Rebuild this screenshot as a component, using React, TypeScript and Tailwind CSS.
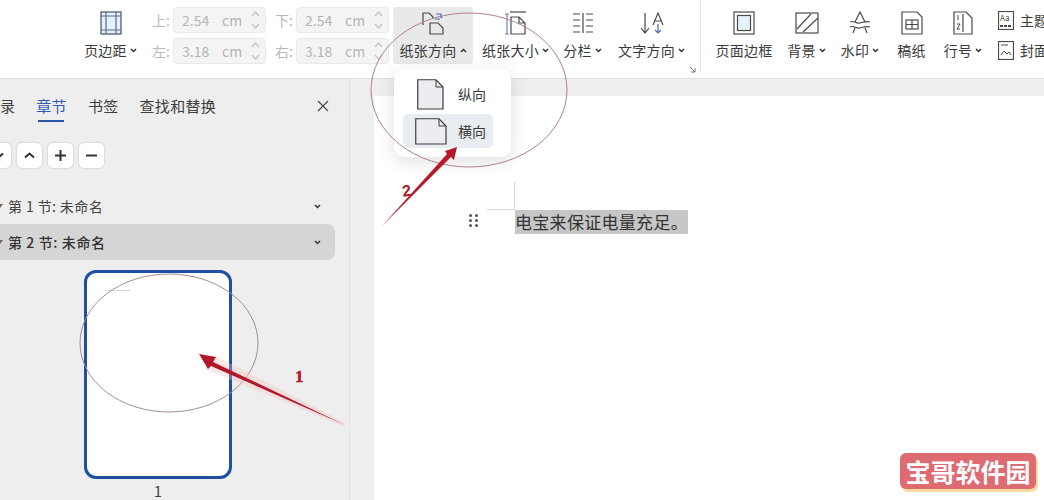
import type { ReactNode } from "react";

const Caret = ({ up = false }: { up?: boolean }) => (
  <svg width="7" height="5" viewBox="0 0 7 5" className="ml-[3px] shrink-0">
    <path d={up ? "M1 4l2.5-2.5L6 4" : "M1 1l2.5 2.5L6 1"} fill="none" stroke="#333" strokeWidth="1.5" />
  </svg>
);

function ToolBtn(props: { label: string; icon: ReactNode; w: string; caret?: boolean; up?: boolean; active?: boolean }) {
  return (
    <div className={`flex h-[57px] flex-col items-center rounded-[3px] pt-[3px] ${props.w} ${props.active ? "bg-[#e9e9e9]" : ""}`}>
      <div className="flex h-[25px] items-center justify-center">{props.icon}</div>
      <div className="mt-[5px] flex items-center whitespace-nowrap text-[14px] leading-[20px] tracking-[0.25px] text-[#3a3a3a]">
        {props.label}
        {props.caret && <Caret up={props.up} />}
      </div>
    </div>
  );
}

function MarginField({ label, value }: { label: string; value: string }) {
  return (
    <div className="flex items-center">
      <span className="w-[21px] text-[14px] text-[#b9b9b9]">{label}</span>
      <div className="flex h-[26px] w-[93px] items-center rounded-[4px] border border-[#e9e9e9] bg-[#f4f4f4] pl-[8px] pr-[5px] text-[14px] text-[#b4b4b4]">
        <span className="w-[40px]">{value}</span>
        <span>cm</span>
        <svg width="9" height="22" viewBox="0 0 9 22" className="ml-auto">
          <path d="M1 7l3.5-4L8 7M1 15l3.5 4L8 15" fill="none" stroke="#c2c2c2" strokeWidth="1.2" />
        </svg>
      </div>
    </div>
  );
}

const line = { fill: "none", stroke: "#4a4a4a", strokeWidth: 1.2 };

const icons = {
  margin: (
    <svg width="22" height="24" viewBox="0 0 22 24">
      <rect x="1" y="1" width="20" height="22" fill="#e4f2f9" stroke="#46506a" strokeWidth="1.2" />
      <path d="M6 1v22M16 1v22M1 5h20M1 19h20" stroke="#5b6b92" strokeWidth="1.2" fill="none" />
    </svg>
  ),
  orient: (
    <svg width="24" height="24" viewBox="0 0 24 24">
      <path d="M2 14V2h6l4 4v2" {...line} />
      <path d="M9 12h8l5 5v6H9z" {...line} />
      <path d="M15 3h5v4M21 7l-2-2M14 8h5" fill="none" stroke="#4f6cae" strokeWidth="1.2" />
    </svg>
  ),
  size: (
    <svg width="24" height="24" viewBox="0 0 24 24">
      <path d="M3 3v20M1 3h4M1 23h4" fill="none" stroke="#6c82b5" strokeWidth="1.2" />
      <path d="M6 1h16" {...line} />
      <path d="M7 6h8l6 6v11H7zM15 6v6h6" {...line} />
    </svg>
  ),
  columns: (
    <svg width="22" height="22" viewBox="0 0 22 22">
      <path d="M1 2h7M1 8h7M1 14h7M1 20h7M14 2h7M14 8h7M14 14h7M14 20h7" {...line} />
      <path d="M11 1v20" {...line} />
    </svg>
  ),
  textDir: (
    <svg width="24" height="24" viewBox="0 0 24 24">
      <path d="M5 2v20M1 17l4 5 4-5" {...line} />
      <path d="M13 14l5-12 5 12M15 10h6" {...line} />
      <path d="M18 13v9M15 19l3 3 3-3" fill="none" stroke="#4f6cae" strokeWidth="1.2" />
    </svg>
  ),
  border: (
    <svg width="22" height="24" viewBox="0 0 22 24">
      <rect x="1" y="1" width="20" height="22" fill="none" stroke="#4a4a4a" strokeWidth="1.2" />
      <rect x="4.500" y="4.500" width="13" height="15" fill="#e6f3f9" stroke="#4a4a4a" strokeWidth="1.2" />
    </svg>
  ),
  bg: (
    <svg width="24" height="22" viewBox="0 0 24 22">
      <rect x="1" y="1" width="22" height="20" {...line} />
      <path d="M2 17L16 2M8 20L23 6" {...line} />
    </svg>
  ),
  mark: (
    <svg width="22" height="24" viewBox="0 0 22 24">
      <path d="M6 11l5-10 5 10M1 11c4-2 6 2 10 1s6-2 10-1M1 16c4-2 6 2 10 1s6-2 10-1M4 22l2-5M18 22l-2-5" {...line} />
    </svg>
  ),
  grid: (
    <svg width="22" height="24" viewBox="0 0 22 24">
      <path d="M1 1h15l5 5v17H1z" {...line} />
      <rect x="5" y="9" width="12" height="9" {...line} />
      <path d="M11 9v9M5 13.500h12" {...line} />
    </svg>
  ),
  lineNo: (
    <svg width="20" height="24" viewBox="0 0 20 24">
      <path d="M1 1h12l6 6v16H1z" {...line} />
      <path d="M10 3v18" {...line} />
      <path d="M5 4v5M4 13h3l-3 5h3" fill="none" stroke="#4a4a4a" strokeWidth="1" />
    </svg>
  ),
};

const Page = ({ w, h }: { w: number; h: number }) => (
  <svg width={w} height={h} viewBox={`0 0 ${w} ${h}`}>
    <path
      d={`M.75.75H${w - 8}L${w - 1} 8V${h - 1}H.75z`}
      fill="#ebedf0"
      stroke="#3c3c3c"
      strokeWidth="1.2"
    />
    <path d={`M${w - 8} 1v7h7`} fill="none" stroke="#3c3c3c" strokeWidth="1" />
  </svg>
);

const Marker = () => (
  <svg width="6" height="6" viewBox="0 0 6 6" className="-ml-[3px] mr-[5px] shrink-0">
    <path d="M0 1h6L3 5z" fill="#666" />
  </svg>
);

export default function App() {
  return (
    <div
      className="relative flex h-[500px] w-[1044px] flex-col overflow-hidden bg-white"
      style={{ fontFamily: '"Noto Sans CJK SC", "Liberation Sans", sans-serif' }}
    >
      <header className="flex h-[78px] shrink-0 items-start bg-white pl-[83px] pt-[7px] [&>*]:shrink-0">
        <ToolBtn label="页边距" icon={icons.margin} w="w-[55px]" caret />
        <div className="ml-[14px] grid grid-cols-2 gap-x-[9px] gap-y-[5px]">
          <MarginField label="上:" value="2.54" />
          <MarginField label="下:" value="2.54" />
          <MarginField label="左:" value="3.18" />
          <MarginField label="右:" value="3.18" />
        </div>
        <div className="ml-[4px]">
          <ToolBtn label="纸张方向" icon={icons.orient} w="w-[80px]" caret up active />
        </div>
        <div className="ml-[8px]">
          <ToolBtn label="纸张大小" icon={icons.size} w="w-[69px]" caret />
        </div>
        <div className="ml-[12px]">
          <ToolBtn label="分栏" icon={icons.columns} w="w-[41px]" caret />
        </div>
        <div className="ml-[14px]">
          <ToolBtn label="文字方向" icon={icons.textDir} w="w-[69px]" caret />
        </div>
        <div className="relative ml-[14px] h-[66px] w-[15px] -translate-y-[7px]">
          <svg width="7" height="7" viewBox="0 0 7 7" className="absolute -left-[11px] top-[66px]">
            <path d="M1 1l5 5M6 2v4H2" fill="none" stroke="#777" strokeWidth="1" />
          </svg>
          <div className="h-[73px] w-px bg-[#e4e4e4]" />
        </div>
        <ToolBtn label="页面边框" icon={icons.border} w="w-[58px]" />
        <div className="ml-[14px]">
          <ToolBtn label="背景" icon={icons.bg} w="w-[39px]" caret />
        </div>
        <div className="ml-[14px]">
          <ToolBtn label="水印" icon={icons.mark} w="w-[40px]" caret />
        </div>
        <div className="ml-[17px]">
          <ToolBtn label="稿纸" icon={icons.grid} w="w-[29px]" />
        </div>
        <div className="ml-[17px]">
          <ToolBtn label="行号" icon={icons.lineNo} w="w-[40px]" caret />
        </div>
        <div className="ml-[15px] flex flex-col gap-[10px] pt-[3px]">
          <div className="flex items-center gap-[6px] whitespace-nowrap text-[14px] leading-[20px] text-[#3a3a3a]">
            <svg width="16" height="19" viewBox="0 0 16 19">
              <rect x=".5" y=".5" width="15" height="18" {...line} />
              <text x="2" y="10" fontSize="8" fill="#444">Aa</text>
              <path d="M2 15h12" stroke="#444" strokeWidth="2" strokeDasharray="3 1" />
            </svg>
            主题
          </div>
          <div className="flex items-center gap-[6px] whitespace-nowrap text-[14px] leading-[20px] text-[#3a3a3a]">
            <svg width="16" height="19" viewBox="0 0 16 19">
              <rect x=".5" y=".5" width="15" height="18" {...line} />
              <path d="M3 4h7M3 14l3-4 3 3 2-2 2 3" {...line} strokeWidth="1" />
            </svg>
            封面
          </div>
        </div>
      </header>

      <div className="flex min-h-0 flex-1 border-t border-[#dedede]">
        <aside className="w-[350px] shrink-0 overflow-hidden border-r border-[#e2e2e2] bg-[#eeeeee]">
          <div className="mt-[15px] flex h-[26px] items-start justify-between pr-[20px]">
            <div className="flex gap-[21px] text-[15px] leading-[24px] tracking-[0.3px] text-[#3d3d3d]">
              <span>录</span>
              <span className="relative text-[#2f5cb4]">
                章节
                <span className="absolute left-[2px] top-[26px] h-[2px] w-[26px] bg-[#2b55a8]" />
              </span>
              <span>书签</span>
              <span>查找和替换</span>
            </div>
            <svg width="12" height="12" viewBox="0 0 12 12" className="mt-[6px]">
              <path d="M1 1l10 10M11 1L1 11" stroke="#444" strokeWidth="1.1" />
            </svg>
          </div>
          <div className="mt-[23px] -ml-[14px] flex gap-[6px]">
            {["M8 10.500l4.500 4 4.500-4", "M8 14.500l4.500-4 4.500 4", "M7 12.500h11M12.500 7v11", "M7 12.500h11"].map((d) => (
              <div key={d} className="h-[25px] w-[25px] rounded-[5px] bg-white shadow-[0_0_2px_rgba(0,0,0,0.25)]">
                <svg width="25" height="25" viewBox="0 0 25 25">
                  <path d={d} fill="none" stroke="#333" strokeWidth="2" />
                </svg>
              </div>
            ))}
          </div>
          <div className="mt-[20px] flex h-[36px] w-[335px] items-center justify-between pr-[14px] text-[14px] tracking-[0.4px] text-[#444]">
            <span className="flex items-center whitespace-pre">
              <Marker />
              第 1 节: 未命名
            </span>
            <Caret />
          </div>
          <div className="flex h-[36px] w-[335px] items-center justify-between rounded-r-[8px] bg-[#d5d5d5] pr-[14px] text-[14px] font-medium tracking-[0.6px] text-[#333]">
            <span className="flex items-center whitespace-pre">
              <Marker />
              第 2 节: 未命名
            </span>
            <Caret />
          </div>
          <div className="ml-[84px] mt-[10px] h-[209px] w-[148px] rounded-[12px] border-[3px] border-[#1f4fa3] bg-white pl-[20px] pt-[17px]">
            <div className="h-px w-[23px] bg-[#d4d4d4]" />
          </div>
          <div className="ml-[84px] mt-[3px] w-[148px] text-center text-[15px] leading-[18px] text-[#444]">1</div>
        </aside>

        <div className="flex min-w-0 flex-1 flex-col bg-[#efefef]">
          <div className="h-[17px] shrink-0" />
          <main className="ml-[24px] flex-1 bg-white pl-[95px] pt-[86px]">
            <div className="flex items-start">
              <div className="mt-[32px] grid w-[9px] shrink-0 grid-cols-[3px_3px] gap-x-[3px] gap-y-[2px]">
                {[0, 1, 2, 3, 4, 5].map((i) => (
                  <span key={i} className="h-[3px] w-[3px] rounded-full bg-[#555]" />
                ))}
              </div>
              <div className="ml-[9px] w-[28px] shrink-0">
                <div className="ml-[27px] h-[27px] w-px bg-[#d8d8d8]" />
                <div className="h-px w-[28px] bg-[#d8d8d8]" />
              </div>
              <div className="mt-[28px] flex h-[24px] w-[173px] items-center whitespace-nowrap bg-[#c6c6c6] text-[17px] tracking-[0.3px] text-[#333]">
                电宝来保证电量充足。
              </div>
            </div>
          </main>
        </div>
      </div>

      {/* dropdown over the doc */}
      <div className="absolute left-[394px] top-[69px] h-[88px] w-[117px] rounded-[10px] bg-white px-[9px] pt-[7px] shadow-[0_4px_18px_rgba(0,0,0,0.13)]">
        <div className="flex h-[36px] items-center pl-[14px] text-[14px] text-[#3a3a3a]">
          <Page w={27} h={31} />
          <span className="ml-[14px]">纵向</span>
        </div>
        <div className="mt-[2px] flex h-[34px] w-[90px] items-center rounded-[5px] bg-[#e9ecf0] pl-[12px] text-[14px] text-[#3a3a3a]">
          <Page w={32} h={27} />
          <span className="ml-[11px]">横向</span>
        </div>
      </div>

      {/* hand-drawn annotations */}
      <svg width="1044" height="500" viewBox="0 0 1044 500" className="pointer-events-none absolute left-0 top-0">
        <ellipse cx="469" cy="90" rx="98" ry="77" fill="none" stroke="#b07f88" strokeWidth="1" />
        <ellipse cx="169" cy="343" rx="89" ry="69" fill="none" stroke="#a38d92" strokeWidth="1" />
        <path d="M345 425L215 358 208 368z" fill="#f2aab0" opacity="0.35" stroke="#f5c2c6" strokeWidth="4" />
        <path d="M345 425L211 366 208 369 199 354 216 357 213 362z" fill="#b2182b" />
        <path d="M382 226L447 154 445 151 457 147 454 160 451 157z" fill="#b9182c" />
        <text x="295" y="382" fontSize="17" fontWeight="700" fill="#b2182b" stroke="#b2182b" strokeWidth="0.5" fontFamily='"Liberation Serif", serif'>1</text>
        <text x="402" y="196" fontSize="16" fontWeight="700" fill="#b2182b" fontFamily='"Liberation Sans", sans-serif' transform="rotate(-8 407 190)">2</text>
      </svg>

      {/* site watermark */}
      <div className="absolute left-[900px] top-[453px] flex h-[36px] w-[136px] items-center justify-center rounded-[6px] bg-[#de6b72] text-[25px] font-bold leading-none text-white shadow-[2px_3px_0_#f8dca0]">
        宝哥软件园
      </div>
    </div>
  );
}
